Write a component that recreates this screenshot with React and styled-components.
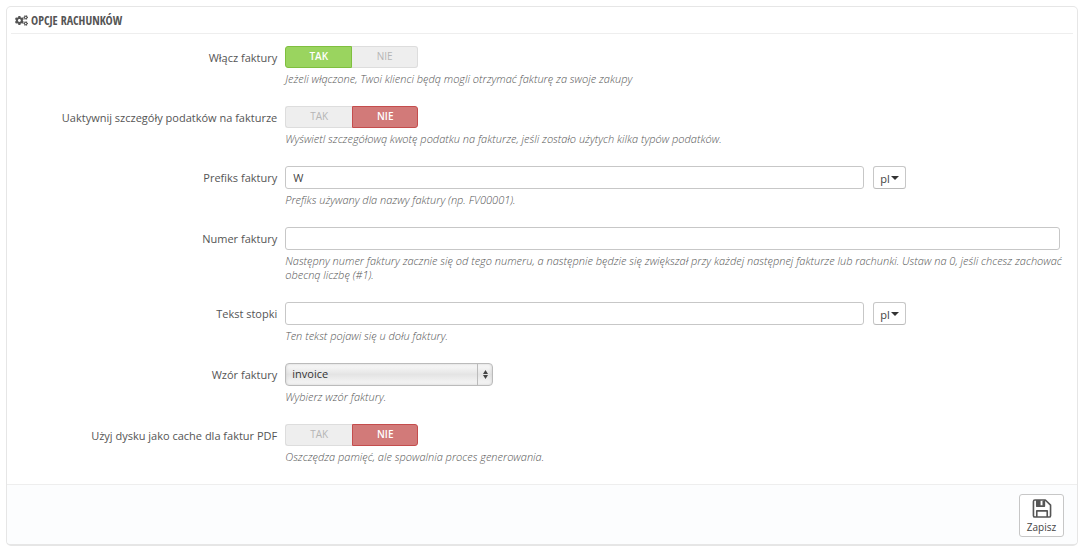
import { useState } from "react";
import styled, { createGlobalStyle } from "styled-components";
import { FaCogs } from "react-icons/fa";

const GlobalStyle = createGlobalStyle`
  * {
    box-sizing: border-box;
  }

  body {
    margin: 0;
    padding: 6px;
    background: #fff;
    color: #555;
    font-family: "Open Sans", "Liberation Sans", sans-serif;
    font-size: 11px;
  }

  button, input, select {
    font: inherit;
    margin: 0;
  }
`;

const Panel = styled.form`
  border: 1px solid #e6e6e6;
  border-bottom-width: 2px;
  border-radius: 5px;
  background: #fff;
  overflow: hidden;
`;

const Heading = styled.h3`
  display: flex;
  align-items: center;
  gap: 3px;
  height: 27px;
  margin: 0 4px 12px;
  padding: 0 4px;
  border-bottom: 1px solid #eee;
  color: #555;
  font-family: "Open Sans Condensed", "Roboto Condensed", sans-serif;
  font-size: 12px;
  font-weight: 400;
  text-transform: uppercase;
`;

const Fields = styled.div`
  padding: 0 17px 0 12px;
`;

const Row = styled.div`
  display: grid;
  grid-template-columns: minmax(0, 1fr) minmax(0, 3fr);
  column-gap: 8px;
  padding-bottom: 20px;
`;

const Label = styled.label`
  line-height: 24px;
  text-align: right;
`;

const Help = styled.p`
  margin: 4px -4px 0 0;
  color: #555;
  font-size: 11px;
  font-style: italic;
  font-weight: 300;
  line-height: 14px;
`;

const Switch = styled.div`
  display: grid;
  grid-template-columns: 67px 66px;
  height: 22px;
`;

const colors = {
  on: { bg: "#9ad45f", border: "#7fbf3f" },
  off: { bg: "#d27a79", border: "#c44d4d" },
  none: { bg: "#eee", border: "#ddd" },
};

const SwitchButton = styled.button`
  padding: 0 0 2px;
  border: 1px solid ${({ $tone }) => colors[$tone].border};
  background: ${({ $tone }) => colors[$tone].bg};
  color: ${({ $tone }) => ($tone === "none" ? "#b5b5b5" : "#fff")};
  font-size: 10px;
  font-weight: ${({ $tone }) => ($tone === "none" ? 400 : 600)};
  line-height: 18px;
  cursor: pointer;

  &:first-child {
    border-radius: 3px 0 0 3px;
    border-right-width: ${({ $tone }) => ($tone === "none" ? "0" : "1px")};
  }

  &:last-child {
    border-radius: 0 3px 3px 0;
    border-left-width: ${({ $tone }) => ($tone === "none" ? "0" : "1px")};
  }
`;

const TextInput = styled.input`
  display: block;
  width: 100%;
  height: 23px;
  padding: 0 7px;
  border: 1px solid #c7c7c7;
  border-radius: 3px;
  background: #fff;
  color: #444;
`;

const LangRow = styled.div`
  display: grid;
  grid-template-columns: calc(75% - 2px) auto;
  justify-content: start;
  column-gap: 9px;
`;

const LangButton = styled.button`
  display: flex;
  align-items: center;
  gap: 1px;
  height: 23px;
  padding: 1px 6px 0;
  border: 1px solid #c7c7c7;
  border-bottom-color: #bbb;
  border-radius: 3px;
  background: #fff;
  color: #444;
  cursor: pointer;
`;

const Caret = styled.span`
  border: 4px solid transparent;
  border-top-color: #333;
  border-bottom: 0;
`;

const SelectBox = styled.div`
  display: grid;
  grid-template-columns: 1fr 15px;
  width: 208px;
  height: 23px;
  border: 1px solid #bbb;
  border-radius: 4px;
  background: linear-gradient(#fbfbfb, #e4e4e4 50%, #f8f8f8);
  box-shadow: inset 0 0 3px #ccc;
  overflow: hidden;
`;

const Select = styled.select`
  grid-area: 1 / 1 / 2 / 3;
  width: 100%;
  padding: 0 6px 2px;
  border: 0;
  background: transparent;
  appearance: none;
  color: #333;
`;

const SelectArrows = styled.span`
  grid-area: 1 / 2;
  display: flex;
  align-items: center;
  justify-content: center;
  border-left: 1px solid #bbb;
  pointer-events: none;
`;

const Footer = styled.div`
  display: flex;
  justify-content: flex-end;
  padding: 9px 13px 7px;
  border-top: 1px solid #eee;
  background: #fcfdfe;
`;

const SaveButton = styled.button`
  display: flex;
  flex-direction: column;
  align-items: center;
  width: 45px;
  height: 43px;
  padding: 4px 0 0;
  border: 1px solid #c7c7c7;
  border-radius: 3px;
  background: #fff;
  color: #444;
  font-size: 10px;
  line-height: 18px;
  cursor: pointer;
`;

const SaveIcon = () => (
  <svg width="20" height="20" viewBox="0 0 20 20" aria-hidden="true">
    <path
      d="M1 2.500Q1 1 2.500 1H13.500L19 6.500V17.500Q19 19 17.500 19H2.500Q1 19 1 17.500ZM4.500 19V12.500H15.500V19M12.500 1V7.500H4.500V1"
      fill="none"
      stroke="#555"
      strokeWidth="1.700"
      strokeLinejoin="round"
    />
    <path d="M4 1H8.500V8H4ZM10.500 2H12.500V7H10.500Z" fill="#555" />
  </svg>
);

const Field = ({ id, label, help, children }) => (
  <Row>
    <Label id={`${id}-label`} htmlFor={id}>
      {label}
    </Label>
    <div>
      {children}
      <Help>{help}</Help>
    </div>
  </Row>
);

const YesNo = ({ id, initial }) => {
  const [on, setOn] = useState(initial);
  return (
    <Switch role="group" aria-labelledby={`${id}-label`}>
      <SwitchButton id={id} type="button" aria-pressed={on} $tone={on ? "on" : "none"} onClick={() => setOn(true)}>
        TAK
      </SwitchButton>
      <SwitchButton type="button" aria-pressed={!on} $tone={on ? "none" : "off"} onClick={() => setOn(false)}>
        NIE
      </SwitchButton>
    </Switch>
  );
};

const LangInput = ({ id, value }) => (
  <LangRow>
    <TextInput id={id} type="text" defaultValue={value} />
    <LangButton type="button">
      pl <Caret />
    </LangButton>
  </LangRow>
);

const App = () => {
  return (
    <>
      <GlobalStyle />
      <Panel onSubmit={(e) => e.preventDefault()}>
        <Heading>
          <FaCogs size={13} />
          Opcje rachunków
        </Heading>
        <Fields>
          <Field
            id="enabled"
            label="Włącz faktury"
            help="Jeżeli włączone, Twoi klienci będą mogli otrzymać fakturę za swoje zakupy"
          >
            <YesNo id="enabled" initial={true} />
          </Field>
          <Field
            id="taxes"
            label="Uaktywnij szczegóły podatków na fakturze"
            help="Wyświetl szczegółową kwotę podatku na fakturze, jeśli zostało użytych kilka typów podatków."
          >
            <YesNo id="taxes" initial={false} />
          </Field>
          <Field id="prefix" label="Prefiks faktury" help="Prefiks używany dla nazwy faktury (np. FV00001).">
            <LangInput id="prefix" value="W" />
          </Field>
          <Field
            id="number"
            label="Numer faktury"
            help="Następny numer faktury zacznie się od tego numeru, a następnie będzie się zwiększał przy każdej następnej fakturze lub rachunki. Ustaw na 0, jeśli chcesz zachować obecną liczbę (#1)."
          >
            <TextInput id="number" type="text" />
          </Field>
          <Field id="footer" label="Tekst stopki" help="Ten tekst pojawi się u dołu faktury.">
            <LangInput id="footer" value="" />
          </Field>
          <Field id="model" label="Wzór faktury" help="Wybierz wzór faktury.">
            <SelectBox>
              <Select id="model" defaultValue="invoice">
                <option value="invoice">invoice</option>
              </Select>
              <SelectArrows>
                <svg width="5" height="9" viewBox="0 0 5 9" fill="#444" aria-hidden="true">
                  <path d="M2.500 0L5 4H0zM2.500 9L0 5H5z" />
                </svg>
              </SelectArrows>
            </SelectBox>
          </Field>
          <Field
            id="cache"
            label="Użyj dysku jako cache dla faktur PDF"
            help="Oszczędza pamięć, ale spowalnia proces generowania."
          >
            <YesNo id="cache" initial={false} />
          </Field>
        </Fields>
        <Footer>
          <SaveButton type="submit">
            <SaveIcon />
            Zapisz
          </SaveButton>
        </Footer>
      </Panel>
    </>
  );
};

export default App;
